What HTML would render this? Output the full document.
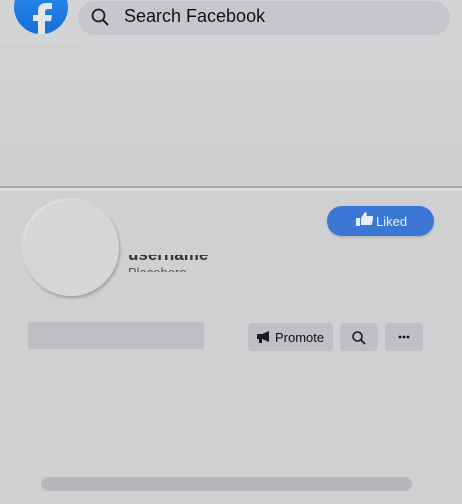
<!DOCTYPE html>
<html><head><meta charset="utf-8"><style>
*{margin:0;padding:0;box-sizing:border-box}
body{width:462px;height:504px;overflow:hidden;background:#cfd0d2;font-family:"Liberation Sans",sans-serif;position:relative}
.a{position:absolute}
</style></head><body>
<div class="a" style="left:0;top:0;width:462px;height:186px;background:linear-gradient(#d3d4d6,#cdced0)"></div>
<div class="a" style="left:0;top:186px;width:462px;height:2px;background:#a9aaad"></div>
<div class="a" style="left:0;top:188px;width:462px;height:3px;background:#dcdddf"></div>
<!-- fb logo -->
<div class="a" style="left:14px;top:-20px;width:54px;height:54px;border-radius:50%;background:linear-gradient(#2d8ef0,#1470d8);overflow:hidden"></div>
<div class="a" style="left:0;top:34px;width:80px;height:10px;background:#d3d4d6"></div>
<svg class="a" style="left:14px;top:0" width="54" height="34"><path d="M31 34V21h6l1-6h-7v-3c0-2 1-3 3-3h4V3h-6c-5 0-8 3-8 8v4h-5v6h5v13z" fill="#e4e6ea"/></svg>
<!-- search -->
<div class="a" style="left:78px;top:1px;width:372px;height:34px;border-radius:17px;background:#c6c7ca"></div>
<svg class="a" style="left:90px;top:7px" width="22" height="20"><circle cx="8.5" cy="8.5" r="6" fill="none" stroke="#222" stroke-width="1.8"/><path d="M13 13l5 5" stroke="#222" stroke-width="2"/></svg>
<div class="a" style="left:124px;top:6px;font-size:18px;color:#111">Search Facebook</div>
<!-- avatar -->
<div class="a" style="left:23px;top:200px;width:96px;height:96px;border-radius:50%;background:#d5d6d8;box-shadow:1px 2px 3px rgba(0,0,0,.25),-1px -1px 2px rgba(255,255,255,.6)"></div>
<div class="a" style="left:128px;top:255px;width:100px;height:17px;overflow:hidden">
<div class="a" style="left:0;top:-10px;font-size:17px;font-weight:bold;color:#333">username</div>
<div class="a" style="left:0;top:10px;font-size:13px;color:#555">Placehere</div>
</div>
<!-- liked -->
<div class="a" style="left:327px;top:206px;width:107px;height:30px;border-radius:15px;background:#3b78d6;box-shadow:0 1px 2px rgba(0,0,0,.2)"></div>
<svg class="a" style="left:355px;top:211px" width="20" height="18"><rect x="1" y="7" width="4" height="8" fill="#e8eefa"/><path d="M6 7l4-6c2 0 2 2 1.5 4H17c1.5 0 1.5 2 .5 2.5 1 .5.8 2-.2 2.3.8.6.5 2-.5 2.2.5.6.2 2-1 2H6z" fill="#e8eefa"/></svg>
<div class="a" style="left:376px;top:214px;font-size:13px;color:#e8eefa">Liked</div>
<!-- grey bar -->
<div class="a" style="left:28px;top:322px;width:176px;height:27px;border-radius:3px;background:#bebfc2"></div>
<!-- promote -->
<div class="a" style="left:248px;top:323px;width:85px;height:28px;border-radius:4px;background:#bfc0c3"></div>
<svg class="a" style="left:256px;top:330px" width="16" height="14"><path d="M1 4h5l7-3v11l-7-3H1z" fill="#1c1c1c"/><rect x="3" y="9" width="3" height="4" fill="#1c1c1c"/></svg>
<div class="a" style="left:275px;top:330px;font-size:13px;color:#111">Promote</div>
<div class="a" style="left:340px;top:323px;width:38px;height:28px;border-radius:4px;background:#bfc0c3"></div>
<svg class="a" style="left:351px;top:330px" width="16" height="16"><circle cx="6.5" cy="6.5" r="4.5" fill="none" stroke="#1c1c1c" stroke-width="1.6"/><path d="M10 10l4 4" stroke="#1c1c1c" stroke-width="1.8"/></svg>
<div class="a" style="left:385px;top:323px;width:38px;height:28px;border-radius:4px;background:#bfc0c3"></div>
<svg class="a" style="left:397px;top:335px" width="14" height="4"><circle cx="3" cy="2" r="1.4" fill="#111"/><circle cx="7" cy="2" r="1.4" fill="#111"/><circle cx="11" cy="2" r="1.4" fill="#111"/></svg>
<!-- bottom bar -->
<div class="a" style="left:41px;top:477px;width:371px;height:14px;border-radius:7px;background:#b6b7ba"></div>
</body></html>
